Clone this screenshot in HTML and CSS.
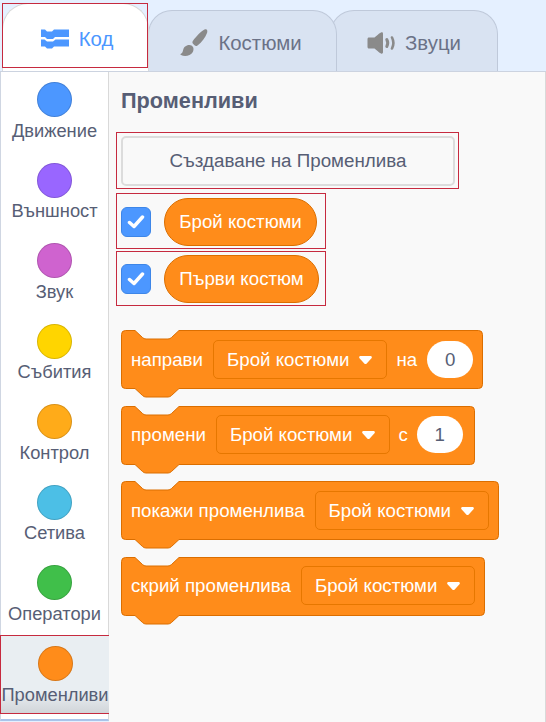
FILE: index.html
```html
<!DOCTYPE html>
<html lang="en">
<head>
  <meta charset="UTF-8" />
  <title>Променливи</title>
  <link rel="stylesheet" href="styles.css">
</head>
<body>
  <!-- Tabs -->
  <div class="tabs">
    <div class="tab tab-code">
      <svg class="tab-icon" width="28" height="20" viewBox="0 0 28 20">
        <path fill="#4c97ff" d="M0 .5h4l2 2h5l2-2h15v7.500H14l-2 2H6l-2-2H0z"/>
        <path fill="#4c97ff" d="M0 10.500h3.500l2.500 2h6l2.500-2H28v7H13l-2 2H6l-2-2H0z"/>
      </svg>
      Код
    </div>
    <div class="tab tab-costumes">
      <svg class="tab-icon" width="28" height="28" viewBox="0 0 28 28">
        <path fill="#8a8a8a" d="M26.500 0.500c1 0.500 1 2 0.500 3.500c-1.500 4-5 9-9.500 12.500c-1 0.800-2 0.800-3-0.200l-1.500-1.500c-0.800-0.800-0.800-2 0-3c3-4 8.500-10 11.500-11.200c0.700-0.300 1.500-0.400 2-0.100z"/>
        <path fill="#8a8a8a" d="M7 16.500c2.500-1 5-0.300 6 1.500c1.300 2.500 0 6.500-3.500 8c-2.700 1.200-6 1.200-8.500 0c-0.700-0.300-0.700-1 0-1.300c1.500-0.700 1.700-2.200 2.200-4c0.500-2 1.700-3.500 3.800-4.200z"/>
      </svg>
      Костюми
    </div>
    <div class="tab tab-sounds">
      <svg class="tab-icon" width="28" height="22" viewBox="0 0 28 22">
        <path fill="#8a8a8a" d="M14 0.500c1-0.500 2 0 2 1.200v18.600c0 1.200-1 1.700-2 1.200c-2.500-1.300-4.500-3.500-6.500-5h-5.500c-1 0-1.500-0.700-1.500-1.500v-8c0-0.800 0.500-1.500 1.500-1.500h5.500c2-1.500 4-3.700 6.500-5z"/>
        <path fill="none" stroke="#8a8a8a" stroke-width="3" stroke-linecap="round" d="M19.800 7.500c1.200 2.200 1.200 4.800 0 7"/>
        <path fill="none" stroke="#8a8a8a" stroke-width="2.600" stroke-linecap="round" d="M25 5.500c1.800 3.500 1.800 7.500 0 11"/>
      </svg>
      Звуци
    </div>
  </div>

  <div class="main">
    <!-- Categories -->
    <div class="sidebar">
      <div class="cat"><span class="dot dot-motion"></span>Движение</div>
      <div class="cat"><span class="dot dot-looks"></span>Външност</div>
      <div class="cat"><span class="dot dot-sound"></span>Звук</div>
      <div class="cat"><span class="dot dot-events"></span>Събития</div>
      <div class="cat"><span class="dot dot-control"></span>Контрол</div>
      <div class="cat"><span class="dot dot-sensing"></span>Сетива</div>
      <div class="cat"><span class="dot dot-operators"></span>Оператори</div>
      <div class="cat cat-active marked"><span class="dot dot-variables"></span>Променливи</div>
    </div>

    <!-- Palette -->
    <div class="palette">
      <div class="palette-title">Променливи</div>

      <div class="create-wrap marked">
        <div class="create-btn">Създаване на Променлива</div>
      </div>

      <div class="var-row marked">
        <span class="check">
          <svg width="18" height="14" viewBox="0 0 18 14"><path fill="none" stroke="#fff" stroke-width="3.500" stroke-linecap="round" stroke-linejoin="round" d="M2.500 7.500l4.500 4l8.500-9.500"/></svg>
        </span>
        <span class="pill pill-first">Брой костюми</span>
      </div>
      <div class="var-row var-row-second marked">
        <span class="check">
          <svg width="18" height="14" viewBox="0 0 18 14"><path fill="none" stroke="#fff" stroke-width="3.500" stroke-linecap="round" stroke-linejoin="round" d="M2.500 7.500l4.500 4l8.500-9.500"/></svg>
        </span>
        <span class="pill">Първи костюм</span>
      </div>

      <div class="blocks">
        <div class="block block-set">
          <svg class="block-bg" width="363" height="68" viewBox="0 0 363 68"><path class="block-shape" d="M.5 4.500a4 4 0 0 1 4-4H14l7.500 7a5 5 0 0 0 3.500 1.500h22a5 5 0 0 0 3.500-1.500L58 .5H357.500a4 4 0 0 1 4 4v50a4 4 0 0 1-4 4H58l-7.500 7a5 5 0 0 1-3.500 1.500H25a5 5 0 0 1-3.500-1.500L14 58.500H4.500a4 4 0 0 1-4-4z"/></svg>
          <span class="label">направи</span>
          <span class="drop">Брой костюми <svg class="caret" width="13" height="8" viewBox="0 0 13 8"><path fill="#fff" d="M1.500 0h10c1.200 0 1.800 1.300 1 2.200L7.700 7.400c-.6.700-1.800.7-2.400 0L.5 2.200C-.3 1.300.3 0 1.500 0z"/></svg></span>
          <span class="label">на</span>
          <span class="num">0</span>
        </div>
        <div class="block block-change">
          <svg class="block-bg" width="354" height="68" viewBox="0 0 354 68"><path class="block-shape" d="M.5 4.500a4 4 0 0 1 4-4H14l7.500 7a5 5 0 0 0 3.500 1.500h22a5 5 0 0 0 3.500-1.500L58 .5H349.500a4 4 0 0 1 4 4v50a4 4 0 0 1-4 4H58l-7.500 7a5 5 0 0 1-3.500 1.500H25a5 5 0 0 1-3.500-1.500L14 58.500H4.500a4 4 0 0 1-4-4z"/></svg>
          <span class="label">промени</span>
          <span class="drop">Брой костюми <svg class="caret" width="13" height="8" viewBox="0 0 13 8"><path fill="#fff" d="M1.500 0h10c1.200 0 1.800 1.300 1 2.200L7.700 7.400c-.6.700-1.800.7-2.400 0L.5 2.200C-.3 1.300.3 0 1.500 0z"/></svg></span>
          <span class="label">с</span>
          <span class="num">1</span>
        </div>
        <div class="block block-show">
          <svg class="block-bg" width="379" height="68" viewBox="0 0 379 68"><path class="block-shape" d="M.5 4.500a4 4 0 0 1 4-4H14l7.500 7a5 5 0 0 0 3.500 1.500h22a5 5 0 0 0 3.500-1.500L58 .5H373.500a4 4 0 0 1 4 4v50a4 4 0 0 1-4 4H58l-7.500 7a5 5 0 0 1-3.500 1.500H25a5 5 0 0 1-3.500-1.500L14 58.500H4.500a4 4 0 0 1-4-4z"/></svg>
          <span class="label">покажи променлива</span>
          <span class="drop">Брой костюми <svg class="caret" width="13" height="8" viewBox="0 0 13 8"><path fill="#fff" d="M1.500 0h10c1.200 0 1.800 1.300 1 2.200L7.700 7.400c-.6.700-1.800.7-2.400 0L.5 2.200C-.3 1.300.3 0 1.500 0z"/></svg></span>
        </div>
        <div class="block block-hide">
          <svg class="block-bg" width="365" height="68" viewBox="0 0 365 68"><path class="block-shape" d="M.5 4.500a4 4 0 0 1 4-4H14l7.500 7a5 5 0 0 0 3.500 1.500h22a5 5 0 0 0 3.500-1.500L58 .5H359.500a4 4 0 0 1 4 4v50a4 4 0 0 1-4 4H58l-7.500 7a5 5 0 0 1-3.500 1.500H25a5 5 0 0 1-3.500-1.500L14 58.500H4.500a4 4 0 0 1-4-4z"/></svg>
          <span class="label">скрий променлива</span>
          <span class="drop">Брой костюми <svg class="caret" width="13" height="8" viewBox="0 0 13 8"><path fill="#fff" d="M1.500 0h10c1.200 0 1.800 1.300 1 2.200L7.700 7.400c-.6.700-1.800.7-2.400 0L.5 2.200C-.3 1.300.3 0 1.500 0z"/></svg></span>
        </div>
      </div>
    </div>
  </div>
</body>
</html>
```

FILE: styles.css
```css
* {
  box-sizing: border-box;
  font-family: 'Liberation Sans', Arial, sans-serif;
}

body {
  margin: 0;
  width: 546px;
  height: 722px;
  overflow: hidden;
  background: #e5f0ff;
  color: #575e75;
}

/* Red annotation boxes */
.marked {
  outline: 1px solid #c62a3f;
  outline-offset: -1px;
}

/* Tabs */
.tabs {
  display: flex;
  align-items: flex-end;
  height: 71px;
  padding-left: 2px;
}

.tab {
  display: flex;
  align-items: center;
  justify-content: center;
  gap: 10px;
  padding-top: 4px;
  border: 1px solid #bfc9da;
  border-bottom: none;
  border-radius: 24px 24px 0 0;
  background: #d9e3f2;
  color: #6b7287;
  font-size: 20.400px;
}

.tab-code {
  position: relative;
  z-index: 3;
  width: 147px;
  height: 68px;
  padding: 3px 0 0 3px;
  background: #fff;
  color: #4c97ff;
  border-color: #d9d9d9;
  border-radius: 26px 26px 0 0;
}

/* the red box around this tab is square, the tab itself is not */
.tab-code::after {
  content: '';
  position: absolute;
  top: -1px;
  left: -1px;
  right: 0;
  bottom: 3px;
  border: 1px solid #c62a3f;
}

.tab-costumes {
  position: relative;
  z-index: 2;
  width: 189px;
  height: 61px;
  margin-left: -1px;
  padding-right: 3px;
}

.tab-sounds {
  width: 168px;
  height: 61px;
  margin-left: -7px;
}

/* Main area */
.main {
  display: flex;
  height: 651px;
  border-top: 1px solid #ccd3e0;
}

.sidebar {
  flex: none;
  width: 109px;
  height: 649px;
  padding-top: 6px;
  background: #fff;
  border-left: 1px solid #cfd6e2;
  border-right: 1px solid #d9d9d9;
  border-bottom: 2px solid #a9c4ea;
}

.cat {
  display: flex;
  flex-direction: column;
  align-items: center;
  height: 80.500px;
  padding-top: 4px;
  font-size: 18.300px;
  white-space: nowrap;
}

.dot {
  flex: none;
  width: 35px;
  height: 35px;
  margin-bottom: 2.500px;
  border-radius: 50%;
  border: 1px solid rgba(0, 0, 0, 0.15);
}

.dot-motion { background: #4c97ff; }
.dot-looks { background: #9966ff; }
.dot-sound { background: #cf63cf; }
.dot-events { background: #ffd500; }
.dot-control { background: #ffab19; }
.dot-sensing { background: #4cbfe6; }
.dot-operators { background: #40bf4a; }
.dot-variables { background: #ff8c1a; }

.cat-active {
  width: 110px;
  height: 79px;
  margin: -6.500px 0 0 -1px;
  padding-top: 11px;
  background: linear-gradient(#e9eef2 72%, #d0d4d8);
}

/* Palette */
.palette {
  flex: 1;
  padding: 18px 0 0 7px;
  background: #f9f9f9;
  border-right: 1px solid #d9d9d9;
}

.palette-title {
  height: 25px;
  margin-left: 5px;
  font-size: 21.700px;
  font-weight: bold;
  line-height: 21px;
  color: #575e75;
}

.create-wrap {
  width: 343px;
  height: 57px;
  margin-top: 17px;
  padding: 4px 4px 0 5px;
}

.create-btn {
  display: flex;
  align-items: center;
  justify-content: center;
  height: 50px;
  background: #f9f9f9;
  border: 2px solid #dcdcdc;
  border-radius: 5px;
  font-size: 18.800px;
}

.var-row {
  display: flex;
  align-items: center;
  width: 210px;
  height: 56px;
  margin-top: 4px;
  padding-left: 5px;
}

.var-row-second {
  height: 55px;
  margin-top: 2px;
}

.check {
  display: flex;
  align-items: center;
  justify-content: center;
  flex: none;
  width: 30px;
  height: 30px;
  margin-top: 2px;
  background: #4c97ff;
  border: 1px solid #3d86e8;
  border-radius: 6px;
}

.var-row-second .check {
  margin-top: 0;
}

.pill {
  display: flex;
  align-items: center;
  justify-content: center;
  height: 48px;
  width: 155px;
  margin: 2px 0 0 13px;
  background: #ff8c1a;
  border: 1px solid #db6e00;
  border-radius: 25px;
  color: #fff;
  font-size: 18.700px;
}

.var-row-second .pill {
  margin-top: 0;
}

.pill-first {
  width: 153px;
}

/* Blocks */
.blocks {
  display: flex;
  flex-direction: column;
  gap: 7.500px;
  margin: 24px 0 0 5px;
}

.block {
  position: relative;
  display: flex;
  align-items: center;
  height: 68px;
  padding: 0 0 10px 10px;
  color: #fff;
  font-size: 18.700px;
  white-space: nowrap;
}

.block-bg {
  position: absolute;
  left: 0;
  top: 0;
}

.block-shape {
  fill: #ff8c1a;
  stroke: #db6e00;
  stroke-width: 1;
}

.label,
.drop,
.num {
  position: relative;
}

.label {
  padding-top: 1px;
}

.drop {
  display: flex;
  align-items: center;
  height: 39px;
  margin-left: 10px;
  padding: 1px 14px 0 13px;
  gap: 10px;
  background: #ff8c1a;
  border: 1px solid #e67700;
  border-radius: 5px;
}

.caret {
  flex: none;
}

.block-set .drop + .label {
  margin-left: 9px;
}

.block-change .drop + .label {
  margin-left: 8px;
}

.num {
  display: flex;
  align-items: center;
  justify-content: center;
  width: 46px;
  height: 37px;
  margin-left: 10px;
  padding-top: 1px;
  background: #fff;
  border-radius: 19px;
  color: #575e75;
}

.block-change .num {
  margin-left: 9px;
}
```
